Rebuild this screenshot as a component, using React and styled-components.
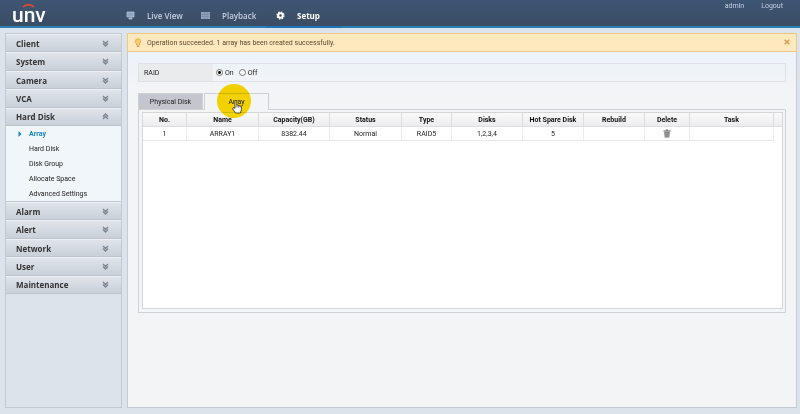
import { useState } from "react";
import styled, { createGlobalStyle } from "styled-components";

const GlobalStyle = createGlobalStyle`
  * {
    box-sizing: border-box;
  }

  body {
    margin: 0;
    background: #dce3ea;
    color: #222;
    font-family: Roboto, "Open Sans", sans-serif;
    font-size: 7px;
  }

  button {
    font: inherit;
    color: inherit;
    border: 0;
    padding: 0;
    background: none;
    cursor: pointer;
  }
`

const Root = styled.div`
  display: flex;
  flex-direction: column;
  min-height: 100vh;
`

const Header = styled.header`
  display: flex;
  height: 28px;
  background: linear-gradient(#3d5674, #3b4c63);
  border-bottom: 2px solid #2a7fb5;
`

const Logo = styled.div`
  position: relative;
  width: 116px;
  padding-left: 12px;
  color: #fff;
  font-family: Roboto, sans-serif;
  font-size: 21px;
  font-weight: 500;
  line-height: 30px;
`

const LogoArc = styled.svg`
  position: absolute;
  left: 22px;
  top: 3px;
`

const Nav = styled.nav`
  display: flex;
  flex: 1;
`

const NavLink = styled.a`
  display: flex;
  align-items: center;
  gap: 12px;
  width: 75px;
  height: 28px;
  padding: 4px 0 0 10px;
  color: ${(props) => (props.$active ? "#fff" : "#c3cfde")};
  border-bottom: 2px solid ${(props) => (props.$active ? "#1b76bd" : "transparent")};
  font-family: "Open Sans", sans-serif;
  font-size: 8px;
  font-weight: ${(props) => (props.$active ? 700 : 600)};
  white-space: nowrap;
  text-decoration: none;
`

const UserLinks = styled.div`
  display: flex;
  gap: 17px;
  padding-right: 17px;
  line-height: 12px;
`

const UserLink = styled.a`
  color: #c3cfde;
  text-decoration: none;
`

const Body = styled.div`
  display: flex;
  flex: 1;
  gap: 5px;
  padding: 5px 3px 6px 5px;
`

const Sidebar = styled.aside`
  flex: none;
  width: 117px;
  border: 1px solid #c3c9d1;
`

const MenuGroup = styled.div`
  display: flex;
  flex-direction: column;
  height: 92px;
`

const MenuButton = styled.button`
  display: flex;
  flex: 1;
  align-items: center;
  justify-content: space-between;
  padding: 0 12px 0 10px;
  background: linear-gradient(#dfe4ea, #c9d0d8);
  border-top: 1px solid #edf0f4;
  border-bottom: 1px solid #bcc3cb;
  color: #333;
  font-family: "Open Sans", sans-serif;
  font-size: 8px;
  font-weight: 700;
`

const SubMenu = styled.div`
  background: #f1f6fb;
  border-bottom: 1px solid #c3c9d1;
`

const SubLink = styled.a`
  display: flex;
  align-items: center;
  height: 15px;
  padding-left: 12px;
  color: ${(props) => (props.$active ? "#1588bd" : "#222")};
  font-weight: ${(props) => (props.$active ? 700 : 400)};
  text-decoration: none;
`

const SubMarker = styled.span`
  display: flex;
  width: 11px;
`

const Main = styled.main`
  flex: 1;
  min-width: 0;
  background: linear-gradient(#ecf3f9 20px, #f3f4f6 60px);
  border: 1px solid #c5cbd3;
`

const Notice = styled.div`
  display: flex;
  align-items: center;
  height: 19px;
  margin: -1px -1px 0;
  padding: 0 6px;
  background: #fee9bf;
  border: 1px solid #e9c988;
  color: #5f4a2c;
`

const NoticeText = styled.span`
  flex: 1;
  padding-left: 5px;
`

const Content = styled.div`
  padding: 11px 10px;
`

const RaidRow = styled.fieldset`
  display: flex;
  align-items: center;
  height: 19px;
  margin: 0 0 11px;
  padding: 0;
  border: 1px solid #dfe1e4;
`

const RaidLabel = styled.span`
  display: flex;
  align-items: center;
  align-self: stretch;
  width: 74px;
  margin-right: 3px;
  padding-left: 5px;
  background: #eaebed;
`

const RadioLabel = styled.label`
  display: flex;
  align-items: center;
  gap: 2px;
  margin-right: 5px;
`

const Radio = styled.input`
  appearance: none;
  width: 7px;
  height: 7px;
  margin: 0;
  border: 1px solid #777;
  border-radius: 50%;
  background: #fff;

  &:checked {
    background: radial-gradient(circle, #111 1px, #fff 2px);
  }
`

const Tabs = styled.div`
  display: flex;
  gap: 1px;
`

const Tab = styled.button`
  position: relative;
  width: 65px;
  height: ${(props) => (props.$active ? "17px" : "16px")};
  margin-bottom: ${(props) => (props.$active ? "-1px" : "0")};
  background: ${(props) => (props.$active ? "#f3f4f6" : "#c3c7cd")};
  border: 1px solid #cdd0d5;
  border-bottom: 0;
`

const Pointer = styled.span`
  position: absolute;
  left: 12px;
  top: -10px;
  width: 34px;
  height: 34px;
  border-radius: 50%;
  background: #ffda00;
  mix-blend-mode: multiply;
  pointer-events: none;
`

const PointerHand = styled.svg`
  position: absolute;
  left: 27px;
  top: 6px;
  pointer-events: none;
`

const Panel = styled.div`
  padding: 2px 2px 3px 3px;
  border: 1px solid #cfd2d7;
`

const TableBox = styled.div`
  min-height: 197px;
  background: #fff;
  border: 1px solid #d5d7da;
`

const Table = styled.table`
  width: 100%;
  table-layout: fixed;
  border-collapse: separate;
  border-spacing: 0;
`

const HeadCell = styled.th`
  height: 14px;
  padding: 0;
  background: linear-gradient(#fafafa, #ececee);
  border-right: 1px solid #dcdde0;
  border-bottom: 1px solid #dcdde0;
  color: #111;
  font-weight: 700;

  &:last-child {
    border-right: 0;
  }
`

const Cell = styled.td`
  height: 14px;
  padding: 0;
  border-right: 1px solid #ececee;
  border-bottom: 1px solid #e6e7e9;
  text-align: center;

  &:last-child {
    border: 0;
  }
`

const DeleteButton = styled.button`
  display: flex;
  margin: 0 auto;
`

// the last column is the empty strip above the scrollbar
const columns = [
  { title: "No.", width: 44 },
  { title: "Name", width: 72 },
  { title: "Capacity(GB)", width: 71 },
  { title: "Status", width: 72 },
  { title: "Type", width: 50 },
  { title: "Disks", width: 71 },
  { title: "Hot Spare Disk", width: 61 },
  { title: "Rebuild", width: 61 },
  { title: "Delete", width: 45 },
  { title: "Task", width: 84 },
  { title: "", width: 8 },
]

const topMenu = ["Client", "System", "Camera", "VCA", "Hard Disk"]
const bottomMenu = ["Alarm", "Alert", "Network", "User", "Maintenance"]
const diskMenu = ["Array", "Hard Disk", "Disk Group", "Allocate Space", "Advanced Settings"]

function Chevron({ up }) {
  return (
    <svg width="7" height="7" viewBox="0 0 7 7" fill="none" stroke="#7b858e" strokeWidth="1.4">
      {up
        ? <path d="M1 3.5 3.5 1 6 3.5M1 6 3.5 3.5 6 6" />
        : <path d="M1 1 3.5 3.5 6 1M1 3.5 3.5 6 6 3.5" />}
    </svg>
  )
}

function MonitorIcon() {
  return (
    <svg width="9" height="9" viewBox="0 0 9 9">
      <path d="M1 1h7v5H1zM3 7h3v1H3z" fill="#8fa6c4" stroke="#b4c3d8" strokeWidth=".8" />
    </svg>
  )
}

function FilmIcon() {
  return (
    <svg width="9" height="9" viewBox="0 0 9 9">
      <path d="M0 1h9v7H0z" fill="#93a4bd" />
      <path d="M0 3.3h9M0 5.7h9M3 1v7M6 1v7" stroke="#6b7f9b" strokeWidth=".5" />
    </svg>
  )
}

function GearIcon() {
  return (
    <svg width="9" height="9" viewBox="0 0 9 9" fill="none" stroke="#fff">
      <circle cx="4.5" cy="4.5" r="2.3" strokeWidth="2" />
      <circle cx="4.5" cy="4.5" r="3.5" strokeWidth="1.2" strokeDasharray="1.5 1.25" />
    </svg>
  )
}

function BulbIcon() {
  return (
    <svg width="8" height="9" viewBox="0 0 8 9">
      <path d="M4 .5a3 3 0 0 0-1.5 5.4V7h3V5.9A3 3 0 0 0 4 .5z" fill="#f7cc6c" stroke="#d9a13c" strokeWidth=".7" />
      <path d="M2.8 8.2h2.4" stroke="#b98a3a" />
    </svg>
  )
}

function TrashIcon() {
  return (
    <svg width="8" height="9" viewBox="0 0 8 9">
      <path d="M.5 2h7M3 1h2" stroke="#555" />
      <path d="M1.2 3h5.6L6.3 8.5H1.7z" fill="#777" />
      <path d="M3 3.5V8M5 3.5V8" stroke="#ccc" strokeWidth=".6" />
    </svg>
  )
}

function Menu({ items, open }) {
  return (
    <MenuGroup>
      {items.map((item) => (
        <MenuButton key={item} aria-expanded={item === open}>
          {item}
          <Chevron up={item === open} />
        </MenuButton>
      ))}
    </MenuGroup>
  )
}

export default function App() {
  const [raid, setRaid] = useState("On")

  return (
    <Root>
      <GlobalStyle />
      <Header>
        <Logo>
          unv
          <LogoArc width="13" height="5" viewBox="0 0 13 5">
            <path d="M1 4Q6.5-.5 12 4" fill="none" stroke="#d2493a" strokeWidth="1.8" />
          </LogoArc>
        </Logo>
        <Nav>
          <NavLink href="#live"><MonitorIcon />Live View</NavLink>
          <NavLink href="#playback"><FilmIcon />Playback</NavLink>
          <NavLink href="#setup" $active><GearIcon />Setup</NavLink>
        </Nav>
        <UserLinks>
          <UserLink href="#admin">admin</UserLink>
          <UserLink href="#logout">Logout</UserLink>
        </UserLinks>
      </Header>
      <Body>
        <Sidebar>
          <Menu items={topMenu} open="Hard Disk" />
          <SubMenu>
            {diskMenu.map((item) => (
              <SubLink key={item} href="#disk" $active={item === "Array"}>
                <SubMarker>
                  {item === "Array" && (
                    <svg width="4" height="6" viewBox="0 0 4 6"><path d="M.5 0 3.5 3 .5 6z" fill="#1588bd" /></svg>
                  )}
                </SubMarker>
                {item}
              </SubLink>
            ))}
          </SubMenu>
          <Menu items={bottomMenu} />
        </Sidebar>
        <Main>
          <Notice role="status">
            <BulbIcon />
            <NoticeText>Operation succeeded. 1 array has been created successfully.</NoticeText>
            <button aria-label="Close">
              <svg width="6" height="6" viewBox="0 0 6 6"><path d="M.7.7 5.3 5.3M5.3.7.7 5.3" stroke="#d9a04a" strokeWidth="1.5" /></svg>
            </button>
          </Notice>
          <Content>
            <RaidRow aria-label="RAID">
              <RaidLabel>RAID</RaidLabel>
              {["On", "Off"].map((value) => (
                <RadioLabel key={value}>
                  <Radio type="radio" name="raid" checked={raid === value} onChange={() => setRaid(value)} />
                  {value}
                </RadioLabel>
              ))}
            </RaidRow>
            <Tabs role="tablist">
              <Tab role="tab">Physical Disk</Tab>
              <Tab role="tab" aria-selected="true" $active>
                Array
                <Pointer />
                <PointerHand width="10" height="14" viewBox="0 0 10 14">
                  <path d="M3 8V1.5q0-1 .9-1t.9 1V5q1.5-.5 1.6.5 1.4-.5 1.5.5 1.5-.3 1.5.8V9.500L8.500 13H3.500L.8 9.200Q.3 8 1.300 7.700T3 8.500z" fill="#fff" stroke="#222" strokeWidth=".8" />
                  <path d="M4.800 5v2.500M6.400 5.500v2M7.900 6v1.500" stroke="#222" strokeWidth=".6" />
                </PointerHand>
              </Tab>
            </Tabs>
            <Panel>
              <TableBox>
                <Table>
                  <colgroup>
                    {columns.map((column) => (
                      <col key={column.title} width={column.width} />
                    ))}
                  </colgroup>
                  <thead>
                    <tr>
                      {columns.map((column) => (
                        <HeadCell key={column.title}>{column.title}</HeadCell>
                      ))}
                    </tr>
                  </thead>
                  <tbody>
                    <tr>
                      <Cell>1</Cell>
                      <Cell>ARRAY1</Cell>
                      <Cell>8382.44</Cell>
                      <Cell>Normal</Cell>
                      <Cell>RAID5</Cell>
                      <Cell>1,2,3,4</Cell>
                      <Cell>5</Cell>
                      <Cell />
                      <Cell>
                        <DeleteButton aria-label="Delete array"><TrashIcon /></DeleteButton>
                      </Cell>
                      <Cell />
                      <Cell />
                    </tr>
                  </tbody>
                </Table>
              </TableBox>
            </Panel>
          </Content>
        </Main>
      </Body>
    </Root>
  )
}
